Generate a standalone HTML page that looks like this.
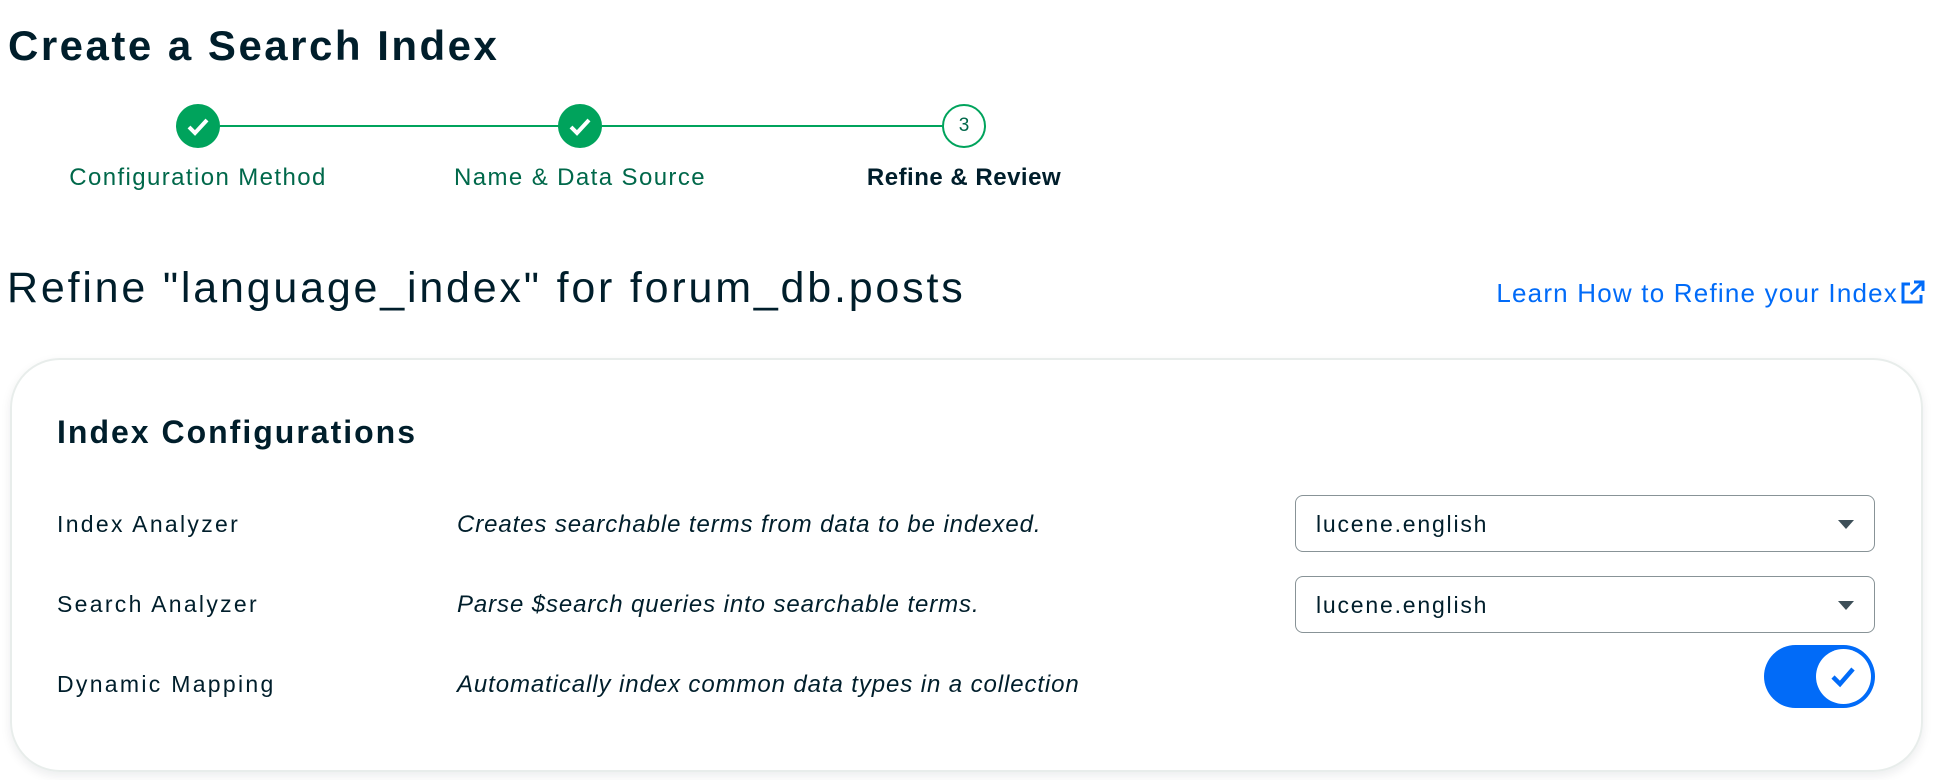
<!DOCTYPE html>
<html><head><meta charset="utf-8"><style>
*{margin:0;padding:0;box-sizing:border-box}
body{width:1942px;height:780px;background:#fff;font-family:"Liberation Sans",sans-serif;color:#001E2B;position:relative;overflow:hidden}
.a{position:absolute;white-space:nowrap}
.circ{position:absolute;width:44px;height:44px;border-radius:50%;background:#00A35C;top:104px}
.lbl{position:absolute;top:164px;font-size:24px;letter-spacing:1.4px;color:#00684A;transform:translateX(-50%);white-space:nowrap}
.sel{position:absolute;left:1295px;width:580px;height:57px;border:1.5px solid #889397;border-radius:8px;font-size:23px;letter-spacing:1.8px;padding:15px 20px}
.sel:after{content:"";position:absolute;right:20px;top:24px;border-left:8px solid transparent;border-right:8px solid transparent;border-top:9px solid #3D4F58}
.row{position:absolute;font-size:23px;letter-spacing:2.3px;white-space:nowrap}
.d{position:absolute;left:457px;font-size:24px;letter-spacing:0.9px;font-style:italic;color:#001E2B;white-space:nowrap}
</style></head><body>
<div class="a" style="left:8px;top:22px;font-size:42px;letter-spacing:2.5px;font-weight:bold">Create a Search Index</div>
<div class="a" style="left:220px;top:125px;width:340px;height:2px;background:#00A35C"></div>
<div class="a" style="left:602px;top:125px;width:340px;height:2px;background:#00A35C"></div>
<div class="circ" style="left:176px"><svg width="44" height="44"><path d="M13 23l6 6 12-13" stroke="#fff" stroke-width="4" fill="none"/></svg></div>
<div class="circ" style="left:558px"><svg width="44" height="44"><path d="M13 23l6 6 12-13" stroke="#fff" stroke-width="4" fill="none"/></svg></div>
<div class="circ" style="left:942px;background:#fff;border:2px solid #00A35C;font-size:19px;text-align:center;line-height:40px;color:#00684A">3</div>
<div class="lbl" style="left:198px">Configuration Method</div>
<div class="lbl" style="left:580px">Name &amp; Data Source</div>
<div class="lbl" style="left:964px;color:#001E2B;font-weight:bold;letter-spacing:0.5px">Refine &amp; Review</div>
<div class="a" style="left:7px;top:264px;font-size:43px;letter-spacing:2.8px">Refine "language_index" for forum_db.posts</div>
<div class="a" style="right:44px;top:278px;font-size:26px;letter-spacing:1.2px;color:#016BF8">Learn How to Refine your Index</div>
<svg class="a" style="left:1898px;top:279px" width="28" height="28" viewBox="0 0 28 28"><path d="M12 5H5v18h18v-7" stroke="#016BF8" stroke-width="3" fill="none"/><path d="M13 15L24 4M16 3h9v9" stroke="#016BF8" stroke-width="3" fill="none"/></svg>
<div class="a" style="left:10px;top:358px;width:1913px;height:414px;border:2px solid #E8EDEB;border-radius:50px;box-shadow:0 4px 10px rgba(0,30,43,0.08)"></div>
<div class="a" style="left:57px;top:414px;font-size:32px;letter-spacing:2px;font-weight:bold">Index Configurations</div>
<div class="row" style="left:57px;top:511px">Index Analyzer</div>
<div class="d" style="top:511px">Creates searchable terms from data to be indexed.</div>
<div class="row" style="left:57px;top:591px">Search Analyzer</div>
<div class="d" style="top:591px">Parse $search queries into searchable terms.</div>
<div class="row" style="left:57px;top:671px">Dynamic Mapping</div>
<div class="d" style="top:671px">Automatically index common data types in a collection</div>
<div class="sel" style="top:495px">lucene.english</div>
<div class="sel" style="top:576px">lucene.english</div>
<div class="a" style="left:1764px;top:645px;width:111px;height:63px;border-radius:32px;background:#016BF8"><div style="position:absolute;right:4px;top:4px;width:55px;height:55px;border-radius:50%;background:#fff"><svg width="55" height="55"><path d="M17 28l7 7 13-15" stroke="#016BF8" stroke-width="4.5" fill="none"/></svg></div></div>
</body></html>
